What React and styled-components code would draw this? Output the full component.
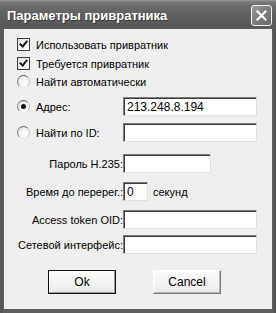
import React from 'react';
import styled, { createGlobalStyle } from 'styled-components';

const GlobalStyle = createGlobalStyle`
	html, body {
		margin: 0;
		padding: 0;
		background: #ffffff;
	}
	body {
		font-family: "Liberation Sans", Arial, sans-serif;
		font-size: 11px;
		color: #000;
	}
`;

const App = () => {
	return (
		<>
			<GlobalStyle />
			<Window>
				<TitleBar>
					<Title>Параметры привратника</Title>
					<CloseButton>
						<svg width="11" height="11" viewBox="0 0 11 11">
							<path d="M1.5 1.5 L9.5 9.5 M9.5 1.5 L1.5 9.5" stroke="#fff" strokeWidth="2.2" strokeLinecap="square" />
						</svg>
					</CloseButton>
				</TitleBar>
				<Body>
					<OptionRow $top={6} $height={19}>
						<CheckBox $checked />
						<span>Использовать привратник</span>
					</OptionRow>
					<OptionRow $top={0} $height={19}>
						<CheckBox $checked />
						<span>Требуется привратник</span>
					</OptionRow>
					<OptionRow $top={0} $height={17}>
						<Radio />
						<span>Найти автоматически</span>
					</OptionRow>

					<FieldRow $top={7}>
						<RadioLabel>
							<Radio $checked />
							<span>Адрес:</span>
						</RadioLabel>
						<TextBox $width={134} defaultValue="213.248.8.194" />
					</FieldRow>
					<FieldRow $top={7}>
						<RadioLabel>
							<Radio />
							<span>Найти по ID:</span>
						</RadioLabel>
						<TextBox $width={134} />
					</FieldRow>

					<FieldRow $top={12}>
						<Label>Пароль H.235:</Label>
						<TextBox $width={88} />
					</FieldRow>
					<FieldRow $top={9}>
						<Label>Время до перерег.:</Label>
						<Inline>
							<TextBox $width={25} defaultValue="0" />
							<Unit>секунд</Unit>
						</Inline>
					</FieldRow>
					<FieldRow $top={9}>
						<Label>Access token OID:</Label>
						<TextBox $width={134} />
					</FieldRow>
					<FieldRow $top={6}>
						<Label>Сетевой интерфейс:</Label>
						<TextBox $width={134} />
					</FieldRow>

					<ButtonBar>
						<Button $default>Ok</Button>
						<Button>Cancel</Button>
					</ButtonBar>
				</Body>
			</Window>
		</>
	);
};

const Window = styled.div`
	width: 276px;
	height: 313px;
	display: flex;
	flex-direction: column;
	background: linear-gradient(to right, #6a6a6a 0, #4f4f4f 1px, #5e5e5e 3px, #5e5e5e 273px, #4a4a4a 276px);
	box-sizing: border-box;
`;

const TitleBar = styled.div`
	height: 29px;
	flex: 0 0 29px;
	display: flex;
	align-items: center;
	justify-content: space-between;
	padding: 0 4px 0 7px;
	box-sizing: border-box;
	background: linear-gradient(to bottom, #9a9a9a 0, #7a7a7a 2px, #6a6a6a 6px, #5f5f5f 16px, #585858 26px, #5e5e5e 29px);
`;

const Title = styled.div`
	font-family: "Liberation Sans", Arial, sans-serif;
	font-weight: bold;
	font-size: 13px;
	color: #ffffff;
	text-shadow: 1px 1px 0 #3a3a3a;
	letter-spacing: 0;
	margin-top: 1px;
`;

const CloseButton = styled.div`
	width: 21px;
	height: 21px;
	box-sizing: border-box;
	border: 1px solid #f4f4f4;
	border-radius: 3px;
	background: linear-gradient(135deg, #9a9a9a 0, #7c7c7c 50%, #6a6a6a 100%);
	display: flex;
	align-items: center;
	justify-content: center;
	margin-top: 2px;
`;

const Body = styled.div`
	flex: 1;
	margin: 0 4px 4px 4px;
	background: #efefef;
	padding-left: 13px;
	display: flex;
	flex-direction: column;
`;

const OptionRow = styled.div`
	display: flex;
	align-items: center;
	gap: 6px;
	height: ${p => p.$height}px;
	margin-top: ${p => p.$top}px;
	white-space: nowrap;
`;

const FieldRow = styled.div`
	display: grid;
	grid-template-columns: 106px 1fr;
	align-items: center;
	height: 19px;
	margin-top: ${p => p.$top}px;
	white-space: nowrap;
`;

const RadioLabel = styled.div`
	display: flex;
	align-items: center;
	gap: 6px;
`;

const Label = styled.div`
	text-align: right;
	padding-right: 0;
	margin-left: -13px;
`;

const Inline = styled.div`
	display: flex;
	align-items: center;
`;

const Unit = styled.span`
	margin-left: 5px;
`;

const CheckBox = styled.span`
	width: 13px;
	height: 13px;
	box-sizing: border-box;
	border: 1px solid #3c3c3c;
	background: linear-gradient(135deg, #e2e2e2 0, #f6f6f6 60%, #ffffff 100%);
	display: inline-block;
	position: relative;
	flex: 0 0 13px;
	&::after {
		content: "";
		display: ${p => (p.$checked ? 'block' : 'none')};
		position: absolute;
		left: 3px;
		top: 0px;
		width: 3px;
		height: 6px;
		border-right: 2px solid #1a1a1a;
		border-bottom: 2px solid #1a1a1a;
		transform: rotate(40deg);
	}
`;

const Radio = styled.span`
	width: 13px;
	height: 13px;
	box-sizing: border-box;
	border-radius: 50%;
	border: 1px solid;
	border-color: #6c6c6c #c4c4c4 #e4e4e4 #7a7a7a;
	background: radial-gradient(circle at 65% 65%, #ffffff 0, #f2f2f2 55%, #d8d8d8 100%);
	display: inline-flex;
	align-items: center;
	justify-content: center;
	flex: 0 0 13px;
	&::after {
		content: "";
		display: ${p => (p.$checked ? 'block' : 'none')};
		width: 5px;
		height: 5px;
		border-radius: 50%;
		background: #111;
	}
`;

const TextBox = styled.input`
	width: ${p => p.$width}px;
	height: 19px;
	box-sizing: border-box;
	margin: 0;
	padding: 0 0 0 3px;
	font-family: "Liberation Sans", Arial, sans-serif;
	font-size: 12px;
	color: #000;
	background: #ffffff;
	border-style: solid;
	border-width: 1px;
	border-color: #7c7c7c #e0e0e0 #e0e0e0 #7c7c7c;
	box-shadow: inset 1px 1px 0 #3c3c3c;
	outline: none;
`;

const ButtonBar = styled.div`
	display: flex;
	gap: 37px;
	margin-top: 16px;
	padding-left: 31px;
`;

const Button = styled.button`
	width: 68px;
	height: 24px;
	box-sizing: border-box;
	margin: 0;
	padding: 0;
	font-family: "Liberation Sans", Arial, sans-serif;
	font-size: 12px;
	color: #000;
	background: linear-gradient(to bottom, #fbfbfb 0, #f2f2f2 70%, #e6e6e6 100%);
	border: 1px solid;
	border-color: ${p => (p.$default ? '#111 #111 #111 #111' : '#ffffff #7a7a7a #7a7a7a #ffffff')};
	box-shadow: ${p => (p.$default
		? 'inset -1px -1px 0 #9a9a9a, inset 1px 1px 0 #ffffff'
		: 'inset -1px -1px 0 #b4b4b4')};
`;

export default App;
